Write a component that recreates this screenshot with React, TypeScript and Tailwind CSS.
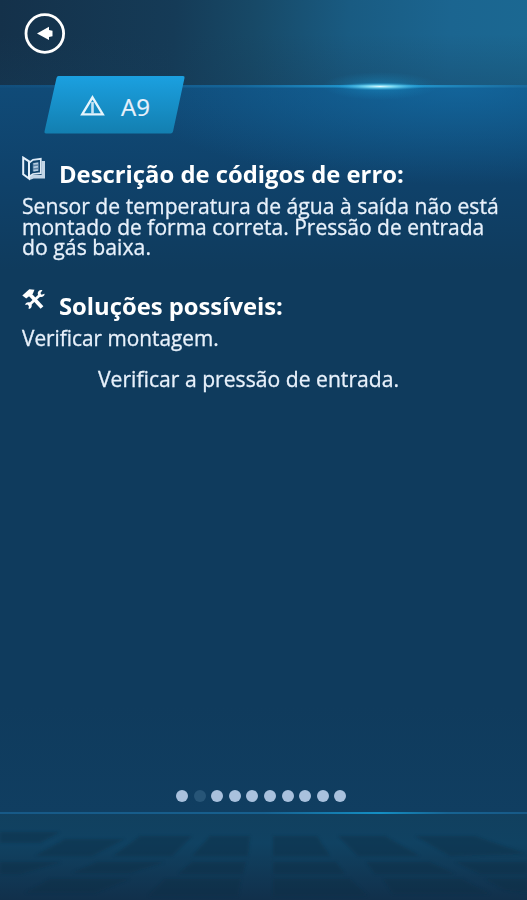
import React, { useState } from 'react';

const pages = 10;

// Floor tiles in the footer, in footer coordinates
const tiles = [
  '0,20 60,20 40,31 0,31',
  '65,27 125,27 92,44 35,44',
  '140,24 192,24 172,44 113,44',
  '210,24 250,24 248,44 192,44',
  '273,24 317,24 330,44 273,44',
  '338,24 385,24 420,44 358,44',
  '415,24 475,24 527,42 450,44',
  '0,50 62,50 20,62 0,62',
  '97,50 165,50 130,61 72,61',
  '192,50 246,50 243,62 178,62',
  '273,50 336,50 345,62 273,62',
  '366,50 430,50 455,62 375,62',
  '455,50 527,50 527,62 480,62',
  '50,67 130,67 95,81 25,81',
  '165,67 241,67 238,84 148,84',
  '273,67 350,67 368,84 273,84',
  '383,67 462,67 490,82 393,82',
  '485,67 527,67 527,80 505,78',
];

const BookIcon = () => (
  <svg width="24" height="25" viewBox="0 0 24 25" fill="none">
    <path d="M7 22.3L11 20.8H21.3V5" stroke="#c3d5e6" strokeWidth="3.4" />
    <path d="M1.2 1.6V18.3L7 22.6V5.3z" stroke="#e6f1fa" strokeWidth="2" />
    <path d="M7.5 6.5L11 3.8L18.8 2.8V17.2L11 18L8 20" stroke="#dce9f5" strokeWidth="1.7" />
    <path d="M10.8 7L16.8 6.2V14.8L10.8 15.5z" fill="#5d84a8" />
    <path d="M11.5 8L16 7.4M11.5 11.3L16 10.7M11.5 14.6L16 14" stroke="#b7cde0" strokeWidth="1.7" />
  </svg>
);

const ToolsIcon = () => (
  <svg width="24" height="23" viewBox="0 0 24 23" fill="none">
    <path d="M.3 7.5L7.3 1.3 12.5 1.8 11 5.3 4.2 10.5z" fill="#fff" />
    <path d="M8 6.5L20 19.5" stroke="#fff" strokeWidth="3.8" />
    <path d="M6.5 17.5L18 7" stroke="#fff" strokeWidth="2.8" />
    <path d="M20.5 2.2A3.5 3.5 0 1 0 22.7 5.8L19.5 6.7 18.4 5z" fill="#fff" />
    <path d="M3.2 17A3.3 3.3 0 1 1 6.5 20.8L7 17.5 5.6 16.4z" fill="#fff" />
  </svg>
);

const App: React.FC = () => {
  const [page, setPage] = useState(1);

  return (
    <div className="relative flex h-[900px] w-[527px] flex-col overflow-hidden bg-[#0f3c5e] font-['Open_Sans','Noto_Sans',sans-serif] text-[#e8f1fb]">
      {/* Header */}
      <header className="h-[85px] shrink-0 bg-[linear-gradient(180deg,transparent_40%,rgba(22,60,88,0.3)_100%),linear-gradient(93deg,#14314a_0%,#153b57_33%,#174967_48%,#195b82_66%,#1b6590_85%,#1b6892_100%)] pt-[13px] pl-6">
        <button className="block" aria-label="Voltar">
          <svg width="42" height="42" viewBox="0 0 42 42">
            <circle cx="20.8" cy="20.5" r="18.8" fill="none" stroke="#fff" strokeWidth="2.8" />
            <path d="M13 20.5L25 13.8V17L28.5 17.8V23.2L25 24V27z" fill="#fff" />
          </svg>
        </button>
      </header>

      {/* Light flare on the horizon */}
      <svg className="pointer-events-none absolute top-[55px] left-0" width="527" height="65" viewBox="0 0 527 65">
        <defs>
          <radialGradient id="glow">
            <stop offset="0" stopColor="#1997d0" stopOpacity=".5" />
            <stop offset="1" stopColor="#1689c0" stopOpacity="0" />
          </radialGradient>
          <radialGradient id="core">
            <stop offset="0" stopColor="#e0fbff" />
            <stop offset=".35" stopColor="#79d9f2" stopOpacity=".85" />
            <stop offset="1" stopColor="#1698d6" stopOpacity="0" />
          </radialGradient>
          <linearGradient id="beam">
            <stop offset="0" stopColor="#1b659a" stopOpacity=".15" />
            <stop offset=".45" stopColor="#1770a6" stopOpacity=".6" />
            <stop offset=".72" stopColor="#25a6e0" />
            <stop offset="1" stopColor="#1c6ea0" stopOpacity=".7" />
          </linearGradient>
        </defs>
        <rect y="30" width="527" height="2.5" fill="url(#beam)" />
        <ellipse cx="380" cy="31" rx="58" ry="14" fill="url(#glow)" />
        <ellipse cx="380" cy="31.5" rx="46" ry="4" fill="url(#core)" />
      </svg>

      <main className="flex flex-1 flex-col bg-[radial-gradient(ellipse_340px_100px_at_460px_0px,rgba(20,112,170,0.7),transparent),linear-gradient(180deg,#104b78_0px,#0f426b_90px,#0f3b5d_185px,#0f3b5d_620px,#103e61_728px)]">
        {/* Error code tag */}
        <div className="relative -mt-[9px] ml-[44px] flex h-[58px] w-[141px] shrink-0">
          <svg className="absolute inset-0" width="141" height="58" viewBox="0 0 141 58">
            <defs>
              <linearGradient id="tag" x2="0" y2="1">
                <stop offset="0" stopColor="#1ba0e0" />
                <stop offset="1" stopColor="#137fb0" />
              </linearGradient>
            </defs>
            <path d="M14.5 0H139q2 0 1.5 2L129 55.5q-.5 2-2.5 2H2q-2 0-1.5-2L12.5 2q.5-2 2-2z" fill="url(#tag)" />
          </svg>
          <div className="relative flex items-center pt-[2px] pl-9">
            <svg width="26" height="22" viewBox="0 0 26 22" fill="none" stroke="#e6f4fc">
              <path d="M12.5 2.3L22.8 19.3H2.2z" strokeWidth="2.3" />
              <path d="M12.5 7v12" strokeWidth="2.6" stroke="#c5e3f4" />
            </svg>
            <span className="ml-[15px] pt-px text-[24px] leading-none [-webkit-text-stroke:0.2px]">A9</span>
          </div>
        </div>

        {/* Description */}
        <section className="mt-[22px] h-[132px] px-[22px]">
          <div className="flex h-[39px] items-start">
            <BookIcon />
            <h2 className="ml-[13px] origin-left scale-x-[0.992] pt-[5px] text-[24px] leading-[26px] font-bold whitespace-nowrap text-white">
              Descrição de códigos de erro:
            </h2>
          </div>
          <p className="text-[22px] leading-[20.7px] whitespace-nowrap [-webkit-text-stroke:0.3px]">
            <span className="block w-fit origin-left scale-x-[0.961]">Sensor de temperatura de água à saída não está</span>
            <span className="block w-fit origin-left scale-x-[0.956]">montado de forma correta. Pressão de entrada</span>
            <span className="block w-fit origin-left scale-x-[0.966]">do gás baixa.</span>
          </p>
        </section>

        {/* Solutions */}
        <section className="px-[22px]">
          <div className="flex h-[39px] items-start">
            <ToolsIcon />
            <h2 className="ml-[13px] origin-left scale-x-[0.991] pt-[5px] text-[24px] leading-[26px] font-bold whitespace-nowrap text-white">
              Soluções possíveis:
            </h2>
          </div>
          <p className="w-fit origin-left scale-x-[0.945] text-[22px] leading-[20.7px] whitespace-nowrap [-webkit-text-stroke:0.3px]">
            Verificar montagem.
          </p>
          <p className="mt-[20px] ml-[76px] w-fit origin-left scale-x-[0.961] text-[22px] leading-[20.7px] whitespace-nowrap [-webkit-text-stroke:0.3px]">
            Verificar a pressão de entrada.
          </p>
        </section>

        {/* Pagination */}
        <nav className="mt-auto mb-[10px] ml-[176px] flex gap-[5.6px]">
          {Array.from({ length: pages }, (_, i) => (
            <button
              key={i}
              onClick={() => setPage(i)}
              aria-label={`${i + 1}`}
              className={`size-3 rounded-full ${i === page ? 'bg-[#275577]' : 'bg-[#a9c1dd]'}`}
            />
          ))}
        </nav>
      </main>

      {/* Footer floor */}
      <footer className="h-[88px] shrink-0 bg-[linear-gradient(180deg,#11405f_0%,#104262_35%,#11304b_100%)]">
        <svg width="527" height="88" viewBox="0 0 527 88">
          <defs>
            <linearGradient id="line">
              <stop offset="0" stopColor="#175987" />
              <stop offset=".5" stopColor="#17608f" />
              <stop offset=".72" stopColor="#148fc4" />
              <stop offset=".85" stopColor="#176392" />
              <stop offset="1" stopColor="#175987" />
            </linearGradient>
            <filter id="soft">
              <feGaussianBlur stdDeviation="1.8" />
            </filter>
          </defs>
          <g filter="url(#soft)" fill="#112f45" opacity=".42">
            {tiles.map((points) => (
              <polygon key={points} points={points} />
            ))}
          </g>
          <rect width="527" height="2" fill="url(#line)" />
        </svg>
      </footer>
    </div>
  );
};

export default App;
